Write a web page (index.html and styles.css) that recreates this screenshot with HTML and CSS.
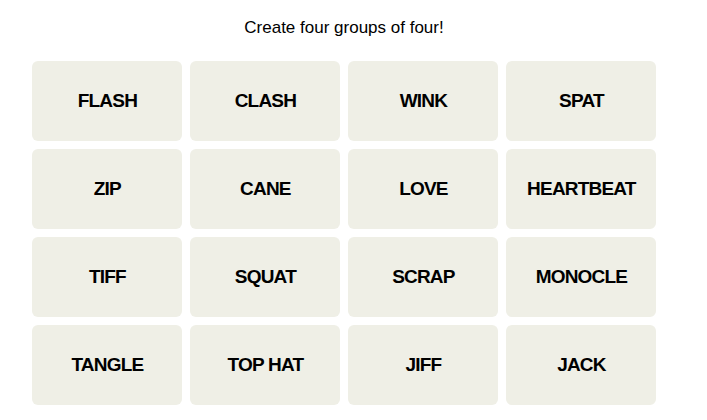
FILE: index.html
```html
<!DOCTYPE html>
<html>
<head>
<meta charset="utf-8">
<link rel="stylesheet" href="styles.css">
</head>
<body>
<main class="game">
  <p class="prompt">Create four groups of four!</p>
  <div class="board">
    <div class="tile">FLASH</div>
    <div class="tile">CLASH</div>
    <div class="tile">WINK</div>
    <div class="tile">SPAT</div>
    <div class="tile">ZIP</div>
    <div class="tile">CANE</div>
    <div class="tile">LOVE</div>
    <div class="tile">HEARTBEAT</div>
    <div class="tile">TIFF</div>
    <div class="tile">SQUAT</div>
    <div class="tile">SCRAP</div>
    <div class="tile">MONOCLE</div>
    <div class="tile">TANGLE</div>
    <div class="tile">TOP HAT</div>
    <div class="tile">JIFF</div>
    <div class="tile">JACK</div>
  </div>
</main>
</body>
</html>
```
FILE: styles.css
```css
html, body {
  margin: 0;
  padding: 0;
  background: #ffffff;
}
body {
  font-family: "Liberation Sans", Arial, sans-serif;
  color: #000;
}
.game {
  width: 624px;
  padding: 17px 0 0 32px;
}
.prompt {
  margin: 0 0 23px;
  text-align: center;
  font-size: 17px;
  line-height: 21px;
}
.board {
  display: grid;
  grid-template-columns: repeat(4, 150px);
  grid-auto-rows: 80px;
  gap: 8px;
}
.tile {
  background: #efefe6;
  border-radius: 6px;
  display: flex;
  align-items: center;
  justify-content: center;
  font-weight: 700;
  font-size: 19px;
  letter-spacing: -0.8px;
  text-indent: 0.8px;
  text-transform: uppercase;
}
```
